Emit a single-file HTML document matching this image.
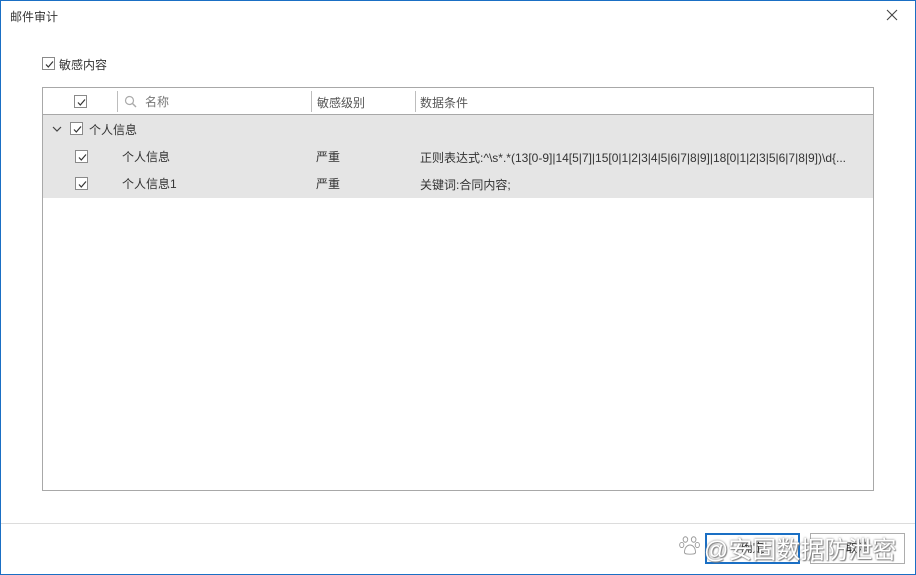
<!DOCTYPE html>
<html><head><meta charset="utf-8"><style>
*{margin:0;padding:0;box-sizing:border-box}
body{width:916px;height:575px;overflow:hidden;background:#fff;font-family:"Liberation Sans","Noto Sans CJK SC",sans-serif;font-size:12px;color:#333;position:relative}
.win{position:absolute;left:0;top:0;width:916px;height:575px;border:1px solid #1a6fc4}
.abs{position:absolute;white-space:nowrap}
.cb{position:absolute;width:13px;height:13px;border:1px solid #8a8a8a;background:#fff}
.cb svg{position:absolute;left:1px;top:1px}
.table{position:absolute;left:42px;top:87px;width:832px;height:404px;border:1px solid #a8a8a8;background:#fff}
.hdr{position:absolute;left:0;top:0;width:830px;height:27px;border-bottom:1px solid #a8a8a8}
.div{position:absolute;top:3px;width:1px;height:21px;background:#bdbdbd}
.grey{position:absolute;left:0;top:27px;width:830px;height:83px;background:#e5e5e5}
.btn{position:absolute;top:533px;width:95px;height:31px;border:1px solid #adadad;background:#fff;text-align:center;line-height:29px;color:#222}
</style></head><body>
<div class="win"></div>
<div class="abs" style="left:10px;top:8px;font-size:12px;color:#333">邮件审计</div>
<svg class="abs" style="left:886px;top:9px" width="12" height="12" viewBox="0 0 12 12"><path d="M1 1L11 11M11 1L1 11" stroke="#444" stroke-width="1.1"/></svg>

<div class="cb" style="left:42px;top:57px"><svg width="11" height="11" viewBox="0 0 11 11"><path d="M2 5.5L4.3 8L9 2.5" stroke="#333" stroke-width="1.2" fill="none"/></svg></div>
<div class="abs" style="left:59px;top:56px">敏感内容</div>

<div class="table">
 <div class="hdr">
  <div class="cb" style="left:31px;top:7px"><svg width="11" height="11" viewBox="0 0 11 11"><path d="M2 5.5L4.3 8L9 2.5" stroke="#333" stroke-width="1.2" fill="none"/></svg></div>
  <div class="div" style="left:74px"></div>
  <svg class="abs" style="left:81px;top:7px" width="13" height="13" viewBox="0 0 13 13"><circle cx="5.5" cy="5.5" r="4" stroke="#aaa" stroke-width="1.2" fill="none"/><path d="M8.5 8.5L12 12" stroke="#aaa" stroke-width="1.4"/></svg>
  <div class="abs" style="left:102px;top:5px;color:#777">名称</div>
  <div class="div" style="left:268px"></div>
  <div class="abs" style="left:274px;top:6px;color:#555">敏感级别</div>
  <div class="div" style="left:372px"></div>
  <div class="abs" style="left:377px;top:6px;color:#555">数据条件</div>
 </div>
 <div class="grey"></div>
 <svg class="abs" style="left:9px;top:37px" width="10" height="8" viewBox="0 0 10 8"><path d="M1 2L5 6L9 2" stroke="#444" stroke-width="1.2" fill="none"/></svg>
 <div class="cb" style="left:27px;top:34px"><svg width="11" height="11" viewBox="0 0 11 11"><path d="M2 5.5L4.3 8L9 2.5" stroke="#333" stroke-width="1.2" fill="none"/></svg></div>
 <div class="abs" style="left:46px;top:33px">个人信息</div>

 <div class="cb" style="left:32px;top:62px"><svg width="11" height="11" viewBox="0 0 11 11"><path d="M2 5.5L4.3 8L9 2.5" stroke="#333" stroke-width="1.2" fill="none"/></svg></div>
 <div class="abs" style="left:79px;top:60px">个人信息</div>
 <div class="abs" style="left:273px;top:60px">严重</div>
 <div class="abs" style="left:377px;top:61px">正则表达式:^\s*.*(13[0-9]|14[5|7]|15[0|1|2|3|4|5|6|7|8|9]|18[0|1|2|3|5|6|7|8|9])\d{...</div>

 <div class="cb" style="left:32px;top:89px"><svg width="11" height="11" viewBox="0 0 11 11"><path d="M2 5.5L4.3 8L9 2.5" stroke="#333" stroke-width="1.2" fill="none"/></svg></div>
 <div class="abs" style="left:79px;top:87px">个人信息1</div>
 <div class="abs" style="left:273px;top:87px">严重</div>
 <div class="abs" style="left:377px;top:88px">关键词:合同内容;</div>
</div>

<div class="abs" style="left:1px;top:523px;width:914px;height:1px;background:#dcdcdc"></div>
<div class="btn" style="left:705px;border:2px solid #1a6fc4;line-height:27px">确定</div>
<div class="btn" style="left:810px">取消</div>

<svg class="abs" style="left:679px;top:534px" width="22" height="22" viewBox="0 0 24 24"><g fill="#fff" stroke="#999" stroke-width="1"><ellipse cx="7" cy="6" rx="2.5" ry="3"/><ellipse cx="16" cy="6" rx="2.5" ry="3"/><ellipse cx="3" cy="12" rx="2.3" ry="2.8"/><ellipse cx="20" cy="12" rx="2.3" ry="2.8"/><path d="M6 20c0-5 3-8 6-8s6 3 6 8c0 2-3 2-6 2s-6 0-6-2z"/></g></svg>
<div class="abs" style="left:704px;top:530px;font-size:24px;color:#fff;text-shadow:0 0 2px #777,1px 1px 1px #888">@安固数据防泄密</div>
</body></html>
